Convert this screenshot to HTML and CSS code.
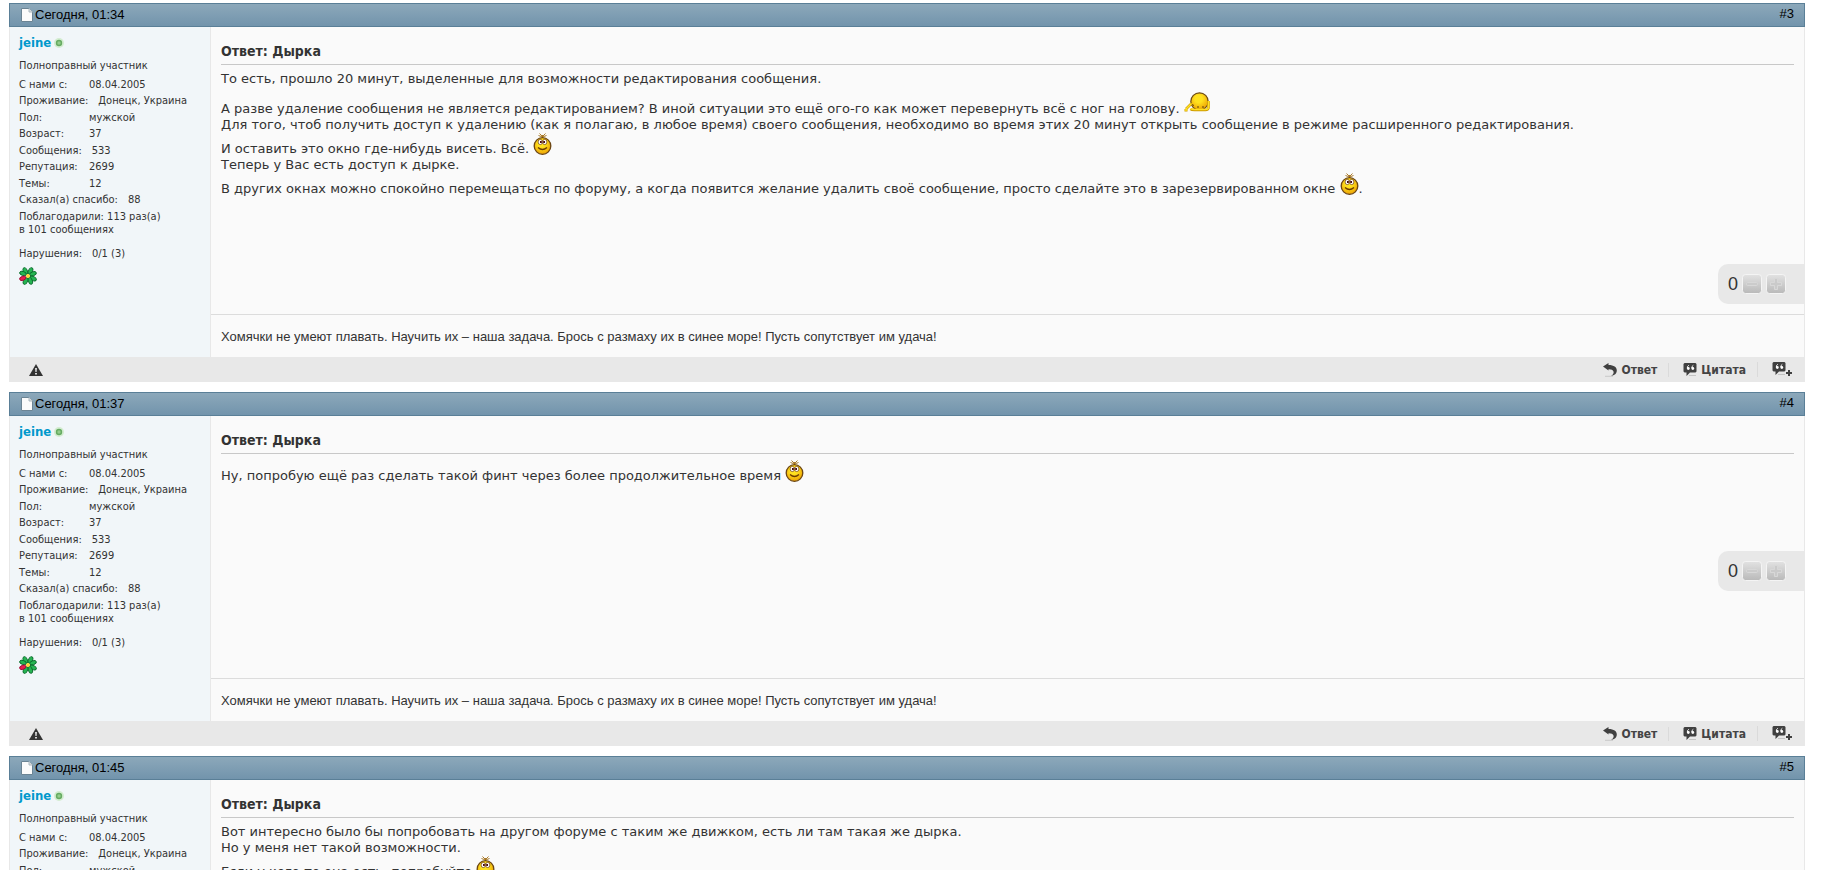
FILE: index.html
```
<!DOCTYPE html>
<html lang="ru">
<head>
<meta charset="utf-8">
<title>Дырка</title>
<link rel="stylesheet" href="styles.css">
</head>
<body>
<svg class="sprite" aria-hidden="true">
  <defs>
    <radialGradient id="yellow" cx="0.45" cy="0.35" r="0.7"><stop offset="0.3" stop-color="#ffe21f"/><stop offset="1" stop-color="#eb9a00"/></radialGradient>
    <linearGradient id="grey" x1="0" y1="0" x2="0" y2="1"><stop offset="0" stop-color="#e2e2e2"/><stop offset="1" stop-color="#b9b9b9"/></linearGradient>
  </defs>
  <symbol id="page" viewBox="0 0 12 14"><path d="M1 .5h7l3.500 3.500v9.500H.5V.5z" fill="#fbfbfb" stroke="#6b8494"/><path d="M8 .5v3.500h3.500" fill="#ddd" stroke="#aab8c0"/></symbol>
  <symbol id="online" viewBox="0 0 10 10"><circle cx="5" cy="5" r="5" fill="#d3ecd0"/><circle cx="5" cy="5" r="3.200" fill="#66ab62"/><circle cx="5" cy="5" r="1.700" fill="#94cc8c"/></symbol>
  <symbol id="clover" viewBox="0 0 18 18"><g fill="#25b552" stroke="#0b6b2c" stroke-width=".9"><ellipse cx="6.300" cy="4" rx="2" ry="3.500" transform="rotate(-25 6.300 4)"/><ellipse cx="11.500" cy="4" rx="2" ry="3.500" transform="rotate(25 11.500 4)"/><ellipse cx="14" cy="6.800" rx="3.500" ry="2" transform="rotate(-20 14 6.800)"/><ellipse cx="14" cy="11.500" rx="3.500" ry="2" transform="rotate(25 14 11.500)"/><ellipse cx="11.300" cy="13.800" rx="2" ry="3.500" transform="rotate(-22 11.300 13.800)"/><ellipse cx="6.500" cy="14" rx="2" ry="3.500" transform="rotate(25 6.500 14)"/><ellipse cx="4" cy="6.500" rx="3.500" ry="2" transform="rotate(20 4 6.500)"/></g><ellipse cx="3.800" cy="11.300" rx="3.300" ry="2" transform="rotate(-20 3.800 11.300)" fill="#e8204c" stroke="#9c0d38" stroke-width=".9"/><circle cx="9" cy="9" r="2" fill="#ffd83c"/></symbol>
  <symbol id="smile" viewBox="0 0 19 22"><path d="M6.500 .5L9.500 3.500 12.500 .5M9.500 5V2M5.500 2.500l4 1.500 4-1.500" stroke="#a06c14" stroke-width=".9" fill="none"/><circle cx="9.500" cy="13" r="8.300" fill="url(#yellow)" stroke="#6b4512" stroke-width="1.300"/><ellipse cx="7.300" cy="9" rx="2.200" ry="2.600" fill="#fff" stroke="#6b3a20" stroke-width=".7"/><ellipse cx="11.700" cy="9" rx="2.200" ry="2.600" fill="#fff" stroke="#6b3a20" stroke-width=".7"/><path d="M7 8h1.800v2H7zM10.200 8H12v2h-1.800z" fill="#4a0c0c"/><path d="M5 14.500q4.500 4 9 0" stroke="#6b3b00" fill="none" stroke-width="1.200"/></symbol>
  <symbol id="bow" viewBox="0 0 26 20"><circle cx="15.500" cy="9.500" r="8.700" fill="url(#yellow)" stroke="#6b4a14" stroke-width="1.200"/><path d="M7.500 11.500L2 17M.5 18.300h3M24.500 9v7q-.5 2-3 2h-11q-3 0-4-1" stroke="#cf9c00" stroke-width="2.600" fill="none"/><path d="M7.500 11.500L2 17M.8 18h2.400M24.500 9v7q-.5 1.500-3 1.500h-11q-2.500 0-4-.8" stroke="#ffe022" stroke-width="1.500" fill="none"/><path d="M8 12.500l2 1M13 15h2M18 15h2" stroke="#5e4310"/></symbol>
  <symbol id="warn" viewBox="0 0 14 12"><path d="M7 0l7 12H0z" fill="#333"/><path d="M6.200 4h1.600l-.3 4h-1zM6.200 9h1.600v1.600H6.200z" fill="#fff"/></symbol>
  <symbol id="reply" viewBox="0 0 14 14"><path d="M0 3.500L5.500 0v2C11 2 13.800 4.300 13.800 7.500c0 3-2.300 5-5.800 5.500 2.200-1.500 3-3 2.500-4.500-.6-1.700-2.500-2.400-5-2.300V7.500z" fill="#404040"/><path d="M2 13.300h8" stroke="#c8c8c8"/></symbol>
  <symbol id="quote" viewBox="0 0 14 14"><path d="M1.500 0h11L13.500 1v7.500L12.500 9.500H7L3.500 13V9.500h-2L.5 8.500V1z" fill="#404040"/><path d="M5.800 2.300Q4.300 3 4.300 5M10.300 2.300Q8.800 3 8.800 5" stroke="#fff" fill="none"/><circle cx="5.300" cy="5.500" r="1.400" fill="#fff"/><circle cx="9.800" cy="5.500" r="1.400" fill="#fff"/><path d="M6 12.500h7" stroke="#c4c4c4"/></symbol>
  <symbol id="multi" viewBox="0 0 20 15"><use href="#quote" width="14" height="14"/><path d="M17 8v6M14 11h6" stroke="#404040" stroke-width="2"/></symbol>
  <symbol id="minus" viewBox="0 0 20 20"><rect x=".5" y=".5" width="19" height="19" rx="3" fill="url(#grey)" stroke="#f4f4f4"/><rect x="4.500" y="8.500" width="11" height="3" rx="1" fill="#cbcbcb" stroke="#d8d8d8"/></symbol>
  <symbol id="plus" viewBox="0 0 20 20"><rect x=".5" y=".5" width="19" height="19" rx="3" fill="url(#grey)" stroke="#f4f4f4"/><path d="M8.500 4.500h3v4h4v3h-4v4h-3v-4h-4v-3h4z" fill="#cacaca" stroke="#d8d8d8" stroke-linejoin="round"/></symbol>
</svg>

<main class="posts">
  <article class="post">
    <header class="post-head"><svg class="page-icon"><use href="#page"/></svg><time>Сегодня, 01:34</time><a class="number" href="#3">#3</a></header>
    <div class="post-body">
      <aside class="user">
        <div class="user-name"><a href="#jeine">jeine</a><svg class="dot"><use href="#online"/></svg></div>
        <div class="rank">Полноправный участник</div>
        <dl class="stats">
          <div><dt>С нами с:</dt><dd>08.04.2005</dd></div>
          <div><dt>Проживание:</dt><dd>Донецк, Украина</dd></div>
          <div><dt>Пол:</dt><dd>мужской</dd></div>
          <div><dt>Возраст:</dt><dd>37</dd></div>
          <div><dt>Сообщения:</dt><dd>533</dd></div>
          <div><dt>Репутация:</dt><dd>2699</dd></div>
          <div><dt>Темы:</dt><dd>12</dd></div>
          <div><dt>Сказал(а) спасибо:</dt><dd>88</dd></div>
        </dl>
        <div class="thanks">Поблагодарили: 113 раз(а)<br>в 101 сообщениях</div>
        <dl class="stats"><div><dt>Нарушения:</dt><dd>0/1 (3)</dd></div></dl>
        <svg class="clover"><use href="#clover"/></svg>
      </aside>
      <div class="content">
        <h2>Ответ: Дырка</h2>
        <div class="text">
          <p>То есть, прошло 20 минут, выделенные для возможности редактирования сообщения.</p>
          <p>А разве удаление сообщения не является редактированием? В иной ситуации это ещё ого-го как может перевернуть всё с ног на голову. <svg class="bow"><use href="#bow"/></svg><br>Для того, чтоб получить доступ к удалению (как я полагаю, в любое время) своего сообщения, необходимо во время этих 20 минут открыть сообщение в режиме расширенного редактирования.<br>И оставить это окно где-нибудь висеть. Всё. <svg class="smile"><use href="#smile"/></svg><br>Теперь у Вас есть доступ к дырке.<br>В других окнах можно спокойно перемещаться по форуму, а когда появится желание удалить своё сообщение, просто сделайте это в зарезервированном окне <svg class="smile"><use href="#smile"/></svg>.</p>
        </div>
        <div class="rating"><span>0</span><button aria-label="Минус"><svg><use href="#minus"/></svg></button><button aria-label="Плюс"><svg><use href="#plus"/></svg></button></div>
        <div class="signature">Хомячки не умеют плавать. Научить их – наша задача. Брось с размаху их в синее море! Пусть сопутствует им удача!</div>
      </div>
    </div>
    <footer class="post-foot"><a class="report" href="#report" aria-label="Жалоба"><svg class="warn"><use href="#warn"/></svg></a><a href="#reply"><svg class="act"><use href="#reply"/></svg>Ответ</a><a href="#quote"><svg class="act"><use href="#quote"/></svg>Цитата</a><a href="#multi" aria-label="Мультицитата"><svg class="multi"><use href="#multi"/></svg></a></footer>
  </article>

  <article class="post">
    <header class="post-head"><svg class="page-icon"><use href="#page"/></svg><time>Сегодня, 01:37</time><a class="number" href="#4">#4</a></header>
    <div class="post-body">
      <aside class="user">
        <div class="user-name"><a href="#jeine">jeine</a><svg class="dot"><use href="#online"/></svg></div>
        <div class="rank">Полноправный участник</div>
        <dl class="stats">
          <div><dt>С нами с:</dt><dd>08.04.2005</dd></div>
          <div><dt>Проживание:</dt><dd>Донецк, Украина</dd></div>
          <div><dt>Пол:</dt><dd>мужской</dd></div>
          <div><dt>Возраст:</dt><dd>37</dd></div>
          <div><dt>Сообщения:</dt><dd>533</dd></div>
          <div><dt>Репутация:</dt><dd>2699</dd></div>
          <div><dt>Темы:</dt><dd>12</dd></div>
          <div><dt>Сказал(а) спасибо:</dt><dd>88</dd></div>
        </dl>
        <div class="thanks">Поблагодарили: 113 раз(а)<br>в 101 сообщениях</div>
        <dl class="stats"><div><dt>Нарушения:</dt><dd>0/1 (3)</dd></div></dl>
        <svg class="clover"><use href="#clover"/></svg>
      </aside>
      <div class="content">
        <h2>Ответ: Дырка</h2>
        <div class="text">
          <p>Ну, попробую ещё раз сделать такой финт через более продолжительное время <svg class="smile"><use href="#smile"/></svg></p>
        </div>
        <div class="rating"><span>0</span><button aria-label="Минус"><svg><use href="#minus"/></svg></button><button aria-label="Плюс"><svg><use href="#plus"/></svg></button></div>
        <div class="signature">Хомячки не умеют плавать. Научить их – наша задача. Брось с размаху их в синее море! Пусть сопутствует им удача!</div>
      </div>
    </div>
    <footer class="post-foot"><a class="report" href="#report" aria-label="Жалоба"><svg class="warn"><use href="#warn"/></svg></a><a href="#reply"><svg class="act"><use href="#reply"/></svg>Ответ</a><a href="#quote"><svg class="act"><use href="#quote"/></svg>Цитата</a><a href="#multi" aria-label="Мультицитата"><svg class="multi"><use href="#multi"/></svg></a></footer>
  </article>

  <article class="post">
    <header class="post-head"><svg class="page-icon"><use href="#page"/></svg><time>Сегодня, 01:45</time><a class="number" href="#5">#5</a></header>
    <div class="post-body">
      <aside class="user">
        <div class="user-name"><a href="#jeine">jeine</a><svg class="dot"><use href="#online"/></svg></div>
        <div class="rank">Полноправный участник</div>
        <dl class="stats">
          <div><dt>С нами с:</dt><dd>08.04.2005</dd></div>
          <div><dt>Проживание:</dt><dd>Донецк, Украина</dd></div>
          <div><dt>Пол:</dt><dd>мужской</dd></div>
        </dl>
      </aside>
      <div class="content">
        <h2>Ответ: Дырка</h2>
        <div class="text">
          <p>Вот интересно было бы попробовать на другом форуме с таким же движком, есть ли там такая же дырка.<br>Но у меня нет такой возможности.<br>Если у кого-то она есть, попробуйте <svg class="smile"><use href="#smile"/></svg></p>
        </div>
      </div>
    </div>
  </article>
</main>
</body>
</html>
```

FILE: styles.css
```
* { box-sizing: border-box; }
html { overflow: hidden; }
body {
  margin: 0;
  height: 100vh;
  overflow: hidden;
  background: #fff;
  color: #333;
  font-family: "DejaVu Sans Condensed", "DejaVu Sans", sans-serif;
  font-size: 11px;
}
a { color: inherit; text-decoration: none; }
svg { display: block; }
.sprite { position: absolute; width: 0; height: 0; }
.posts {
  display: flex;
  flex-direction: column;
  gap: 10px;
  padding: 3px 17px 0 9px;
}
.post-head {
  display: flex;
  align-items: center;
  height: 24px;
  padding: 0 10px 0 11px;
  border: 1px solid #5a7f97;
  background: linear-gradient(#8ca8ba, #7294ac);
  color: #000;
  font: 13px/16px "Liberation Sans", Arial, sans-serif;
}
.page-icon { width: 12px; height: 14px; margin-right: 2px; }
.number { margin-left: auto; padding-bottom: 2px; }
.post-body {
  display: flex;
  border: solid #e8e8e8;
  border-width: 0 1px;
  background: #fafafa;
}
.user {
  flex: 0 0 201px;
  padding: 8px 9px 47px;
  border-right: 1px solid #e8e8e8;
  background: #f1f6f9;
}
.user-name {
  display: flex;
  align-items: center;
  gap: 3px;
  color: #0099cc;
  font-size: 13px;
  font-weight: bold;
  line-height: 16px;
}
.dot { width: 10px; height: 10px; }
.rank { margin: 8px 0 5px; line-height: 14px; }
.stats { margin: 0; }
.stats div {
  display: flex;
  gap: 10px;
  margin-bottom: 2px;
  line-height: 14px;
}
.stats div:nth-child(even) { margin-bottom: 3px; }
.stats dt { min-width: 60px; }
.stats dd { margin: 0; }
.thanks { margin-bottom: 11px; line-height: 13px; }
.clover { width: 18px; height: 18px; margin-top: 6px; }
.content {
  display: flex;
  flex: 1;
  flex-direction: column;
  min-width: 0;
}
h2 {
  margin: 16px 10px 6px;
  padding-bottom: 5px;
  border-bottom: 1px solid #c8c8c8;
  font-size: 14px;
  line-height: 16px;
}
.text {
  padding: 0 10px;
  font: 13px/16px "DejaVu Sans", Verdana, sans-serif;
}
p { margin: 0 0 5px; }
.text svg { display: inline-block; }
.smile { width: 19px; height: 22px; vertical-align: -2px; }
.bow { width: 26px; height: 20px; vertical-align: 1px; }
.rating {
  display: flex;
  align-items: center;
  align-self: flex-end;
  gap: 4px;
  height: 40px;
  margin: 62px 0 10px;
  padding: 0 18px 0 10px;
  border-radius: 10px 0 0 10px;
  background: #e8e8e8;
  font: 18px/20px "Liberation Sans", Arial, sans-serif;
}
.rating button { padding: 0; border: 0; background: none; }
.rating svg { width: 20px; height: 20px; }
.signature {
  margin-top: auto;
  padding: 14px 10px 12px;
  border-top: 1px solid #dcdcdc;
  font: 13px/16px "Liberation Sans", Arial, sans-serif;
}
.post-foot {
  display: flex;
  align-items: center;
  height: 25px;
  padding-right: 13px;
  background: #e8e8e8;
  color: #444;
  font-size: 12px;
  font-weight: bold;
}
.post-foot a { display: flex; align-items: center; gap: 4px; }
.post-foot a + a + a { margin-left: 11px; padding-left: 14px; border-left: 1px solid #dadada; }
.post-foot .report { margin: 0 auto 0 20px; }
.warn { width: 14px; height: 12px; }
.act { width: 14px; height: 14px; }
.multi { width: 20px; height: 15px; }
```
